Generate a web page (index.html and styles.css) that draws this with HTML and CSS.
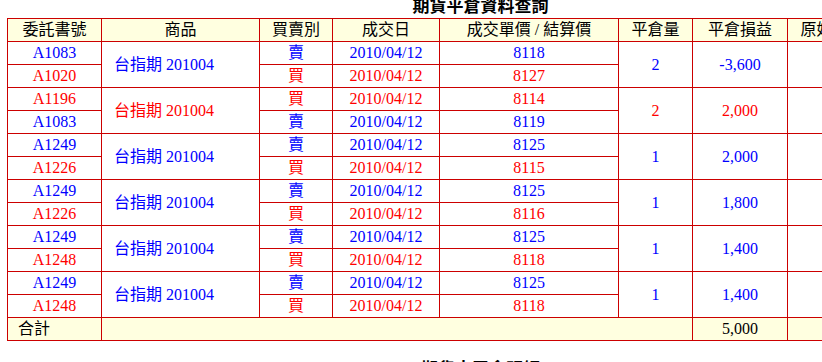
FILE: index.html
```html
<!DOCTYPE html>
<html lang="zh-Hant">
<head>
<meta charset="utf-8">
<title>期貨平倉資料查詢</title>
<link rel="stylesheet" href="styles.css">
</head>
<body>
<div class="page">
  <h1 class="title">期貨平倉資料查詢</h1>
  <table class="grid">
    <colgroup>
      <col class="c1"><col class="c2"><col class="c3"><col class="c4"><col class="c5"><col class="c6"><col class="c7"><col class="c8"><col class="c9">
    </colgroup>
    <thead>
      <tr>
        <th>委託書號</th><th>商品</th><th>買賣別</th><th>成交日</th><th>成交單價 / 結算價</th><th>平倉量</th><th>平倉損益</th><th>原始保證金</th><th>幣別</th>
      </tr>
    </thead>
    <tbody>
      <tr class="b">
        <td>A1083</td><td rowspan="2" class="prod">台指期 201004</td><td>賣</td><td>2010/04/12</td><td>8118</td><td rowspan="2">2</td><td rowspan="2">-3,600</td><td rowspan="2"></td><td rowspan="2"></td>
      </tr>
      <tr class="r">
        <td>A1020</td><td>買</td><td>2010/04/12</td><td>8127</td>
      </tr>
      <tr class="r">
        <td>A1196</td><td rowspan="2" class="prod">台指期 201004</td><td>買</td><td>2010/04/12</td><td>8114</td><td rowspan="2">2</td><td rowspan="2">2,000</td><td rowspan="2"></td><td rowspan="2"></td>
      </tr>
      <tr class="b">
        <td>A1083</td><td>賣</td><td>2010/04/12</td><td>8119</td>
      </tr>
      <tr class="b">
        <td>A1249</td><td rowspan="2" class="prod">台指期 201004</td><td>賣</td><td>2010/04/12</td><td>8125</td><td rowspan="2">1</td><td rowspan="2">2,000</td><td rowspan="2"></td><td rowspan="2"></td>
      </tr>
      <tr class="r">
        <td>A1226</td><td>買</td><td>2010/04/12</td><td>8115</td>
      </tr>
      <tr class="b">
        <td>A1249</td><td rowspan="2" class="prod">台指期 201004</td><td>賣</td><td>2010/04/12</td><td>8125</td><td rowspan="2">1</td><td rowspan="2">1,800</td><td rowspan="2"></td><td rowspan="2"></td>
      </tr>
      <tr class="r">
        <td>A1226</td><td>買</td><td>2010/04/12</td><td>8116</td>
      </tr>
      <tr class="b">
        <td>A1249</td><td rowspan="2" class="prod">台指期 201004</td><td>賣</td><td>2010/04/12</td><td>8125</td><td rowspan="2">1</td><td rowspan="2">1,400</td><td rowspan="2"></td><td rowspan="2"></td>
      </tr>
      <tr class="r">
        <td>A1248</td><td>買</td><td>2010/04/12</td><td>8118</td>
      </tr>
      <tr class="b">
        <td>A1249</td><td rowspan="2" class="prod">台指期 201004</td><td>賣</td><td>2010/04/12</td><td>8125</td><td rowspan="2">1</td><td rowspan="2">1,400</td><td rowspan="2"></td><td rowspan="2"></td>
      </tr>
      <tr class="r">
        <td>A1248</td><td>買</td><td>2010/04/12</td><td>8118</td>
      </tr>
    </tbody>
    <tfoot>
      <tr class="total">
        <td class="label">合計</td><td colspan="5"></td><td>5,000</td><td></td><td></td>
      </tr>
    </tfoot>
  </table>
  <h2 class="subtitle">期貨未平倉明細</h2>
</div>
</body>
</html>
```

FILE: styles.css
```css
html, body {
  margin: 0;
  padding: 0;
  overflow: hidden;
  background: #ffffff;
}

.page {
  width: 947px;
  padding-left: 7px;
  font-family: "Liberation Serif", "Noto Sans CJK TC", serif;
  font-size: 16px;
  color: #000000;
}

.title,
.subtitle {
  font-family: "Noto Sans CJK TC", sans-serif;
  font-size: 17px;
  font-weight: bold;
  line-height: 18px;
  text-align: center;
  margin: -4px 0 0 0;
}

.subtitle {
  line-height: 20px;
  margin: 17px 0 0 0;
}

.grid {
  margin-top: 4px;
  width: 947px;
  table-layout: fixed;
  border-collapse: collapse;
  border: 1px solid #cc0000;
}

.c1 { width: 94px; }
.c2 { width: 158px; }
.c3 { width: 73px; }
.c4 { width: 107px; }
.c5 { width: 179px; }
.c6 { width: 74px; }
.c7 { width: 95px; }
.c8 { width: 106px; }
.c9 { width: 61px; }

.grid th,
.grid td {
  border: 1px solid #cc0000;
  height: 22px;
  padding: 0;
  text-align: center;
  vertical-align: middle;
  font-weight: normal;
  line-height: 20px;
  white-space: nowrap;
  overflow: hidden;
}

.grid thead th {
  background: #ffffe0;
  color: #000000;
}

.grid tr.b td { color: #0000ff; }
.grid tr.r td { color: #ff0000; }

.grid td.prod {
  text-align: left;
  padding-left: 12px;
}

.grid tr.total td {
  background: #ffffe0;
  color: #000000;
}

.grid tr.total td.label {
  text-align: left;
  padding-left: 10px;
}
```
